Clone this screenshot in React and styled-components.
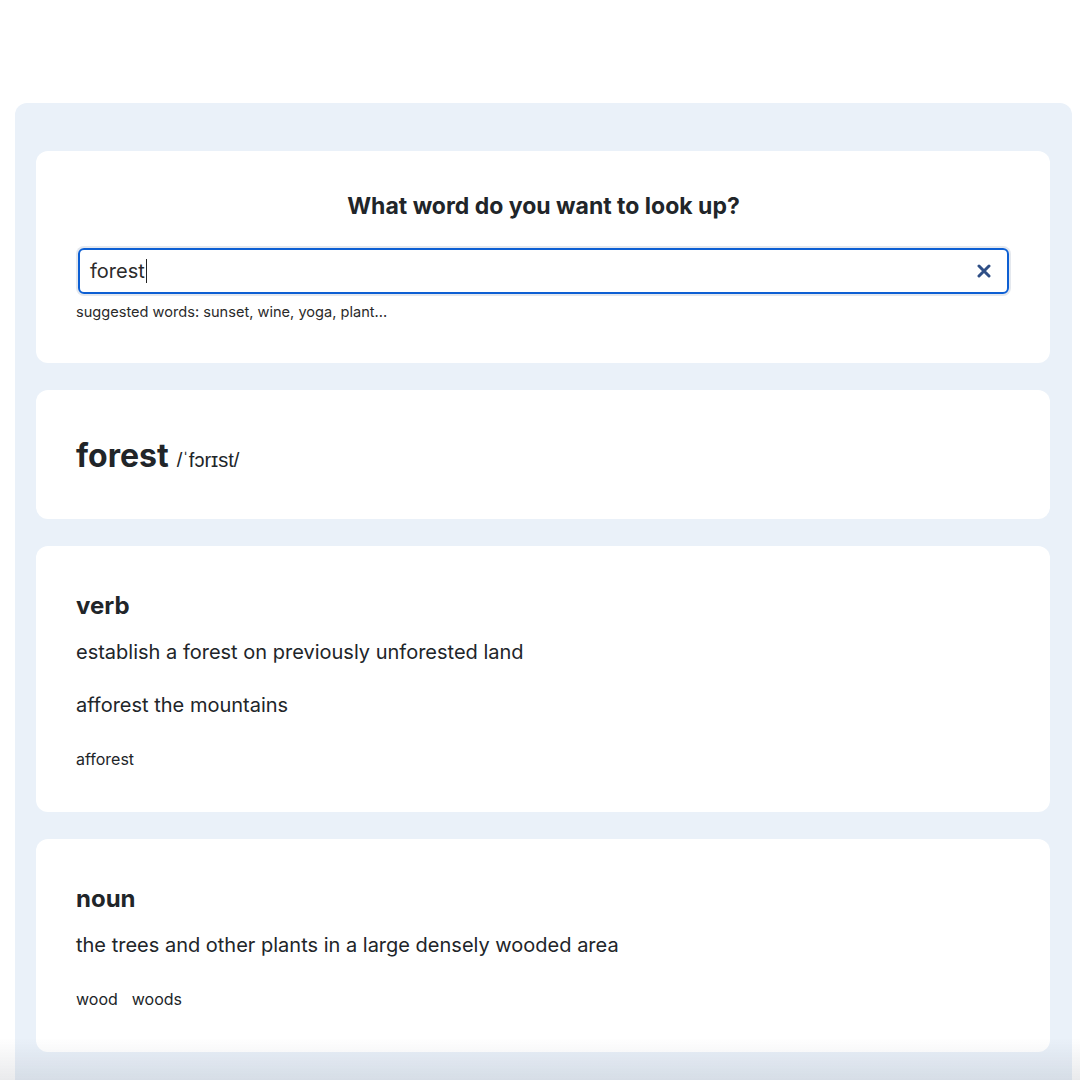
import React from "react";
import styled, { createGlobalStyle } from "styled-components";

const textColor = "#212529";
const cardGap = "27px";

const GlobalStyle = createGlobalStyle`
  body {
    margin: 0;
    background: #ffffff;
    font-family: Inter, "Noto Sans", "Liberation Sans", sans-serif;
    color: ${textColor};
  }
  * {
    box-sizing: border-box;
  }
`;

const Page = styled.div`
  padding: 103px 8px 0 15px;
  height: 1080px;
  overflow: hidden;
`;

const Panel = styled.main`
  background-color: #eaf1f9;
  border-radius: 12px 12px 0 0;
  padding: 48px 22px 60px 21px;
  display: flex;
  flex-direction: column;
  gap: ${cardGap};
`;

const Card = styled.section`
  background: #ffffff;
  border-radius: 12px;
  padding: 40px 39px 41px 40px;
  display: flex;
  flex-direction: column;
`;

const SearchTitle = styled.h2`
  margin: 0;
  text-align: center;
  font-size: 23px;
  line-height: 30px;
  font-weight: 700;
`;

const SearchField = styled.div`
  margin: 27px 2px 0 2px;
  height: 46px;
  border: 2px solid #0d5fd3;
  border-radius: 6px;
  box-shadow: 0 0 0 2px #e4e8ee;
  display: flex;
  align-items: center;
  justify-content: space-between;
  padding: 0 16px 0 10px;
  font-size: 20px;
`;

const FieldText = styled.span`
  display: flex;
  align-items: center;
  color: #2b2b2b;
`;

const Caret = styled.span`
  display: inline-block;
  width: 1.5px;
  height: 24px;
  background: #222;
  margin-left: 1px;
`;

const ClearButton = styled.button`
  border: none;
  background: none;
  padding: 0;
  display: flex;
  cursor: pointer;
`;

const Suggestions = styled.p`
  margin: 8px 0 0 0;
  font-size: 14.6px;
  line-height: 20px;
  color: #2a2a2a;
`;

const WordLine = styled.div`
  display: flex;
  align-items: baseline;
  gap: 8px;
  height: 48px;
  line-height: 44px;
  padding-top: 4px;
`;

const Word = styled.h1`
  margin: 0;
  font-size: 32px;
  font-weight: 700;
`;

const Phonetic = styled.span`
  font-size: 20px;
  font-family: "Liberation Sans", "DejaVu Sans", sans-serif;
`;

const PartOfSpeech = styled.h3`
  margin: 2px 0 0 0;
  font-size: 24px;
  line-height: 36px;
  font-weight: 700;
`;

const Definition = styled.p`
  margin: 13px 0 0 0;
  font-size: 20px;
  line-height: 30px;
`;

const Example = styled.p`
  margin: 23px 0 0 0;
  font-size: 20px;
  line-height: 30px;
`;

const Synonyms = styled.div`
  margin-top: 27px;
  display: flex;
  gap: 14px;
  font-size: 16px;
  line-height: 24px;
`;

const BottomFade = styled.div`
  position: fixed;
  left: 0;
  right: 0;
  bottom: 0;
  height: 42px;
  pointer-events: none;
  background: linear-gradient(rgba(40, 50, 70, 0), rgba(40, 50, 70, 0.1));
`;

const meanings = [
  {
    partOfSpeech: "verb",
    definition: "establish a forest on previously unforested land",
    example: "afforest the mountains",
    synonyms: ["afforest"],
  },
  {
    partOfSpeech: "noun",
    definition: "the trees and other plants in a large densely wooded area",
    synonyms: ["wood", "woods"],
  },
];

const ClearIcon = () => (
  <svg width="14" height="14" viewBox="0 0 14 14">
    <path
      d="M2 2 L12 12 M12 2 L2 12"
      stroke="#2f4f86"
      strokeWidth="3"
      strokeLinecap="round"
    />
  </svg>
);

const App = () => {
  return (
    <Page>
      <GlobalStyle />
      <Panel>
        <Card>
          <SearchTitle>What word do you want to look up?</SearchTitle>
          <SearchField>
            <FieldText>
              forest
              <Caret />
            </FieldText>
            <ClearButton aria-label="clear">
              <ClearIcon />
            </ClearButton>
          </SearchField>
          <Suggestions>suggested words: sunset, wine, yoga, plant...</Suggestions>
        </Card>
        <Card>
          <WordLine>
            <Word>forest</Word>
            <Phonetic>/ˈfɔrɪst/</Phonetic>
          </WordLine>
        </Card>
        {meanings.map((meaning, i) => (
          <Card key={i}>
            <PartOfSpeech>{meaning.partOfSpeech}</PartOfSpeech>
            <Definition>{meaning.definition}</Definition>
            {meaning.example && <Example>{meaning.example}</Example>}
            <Synonyms>
              {meaning.synonyms.map((s) => (
                <span key={s}>{s}</span>
              ))}
            </Synonyms>
          </Card>
        ))}
      </Panel>
      <BottomFade />
    </Page>
  );
};

export default App;
